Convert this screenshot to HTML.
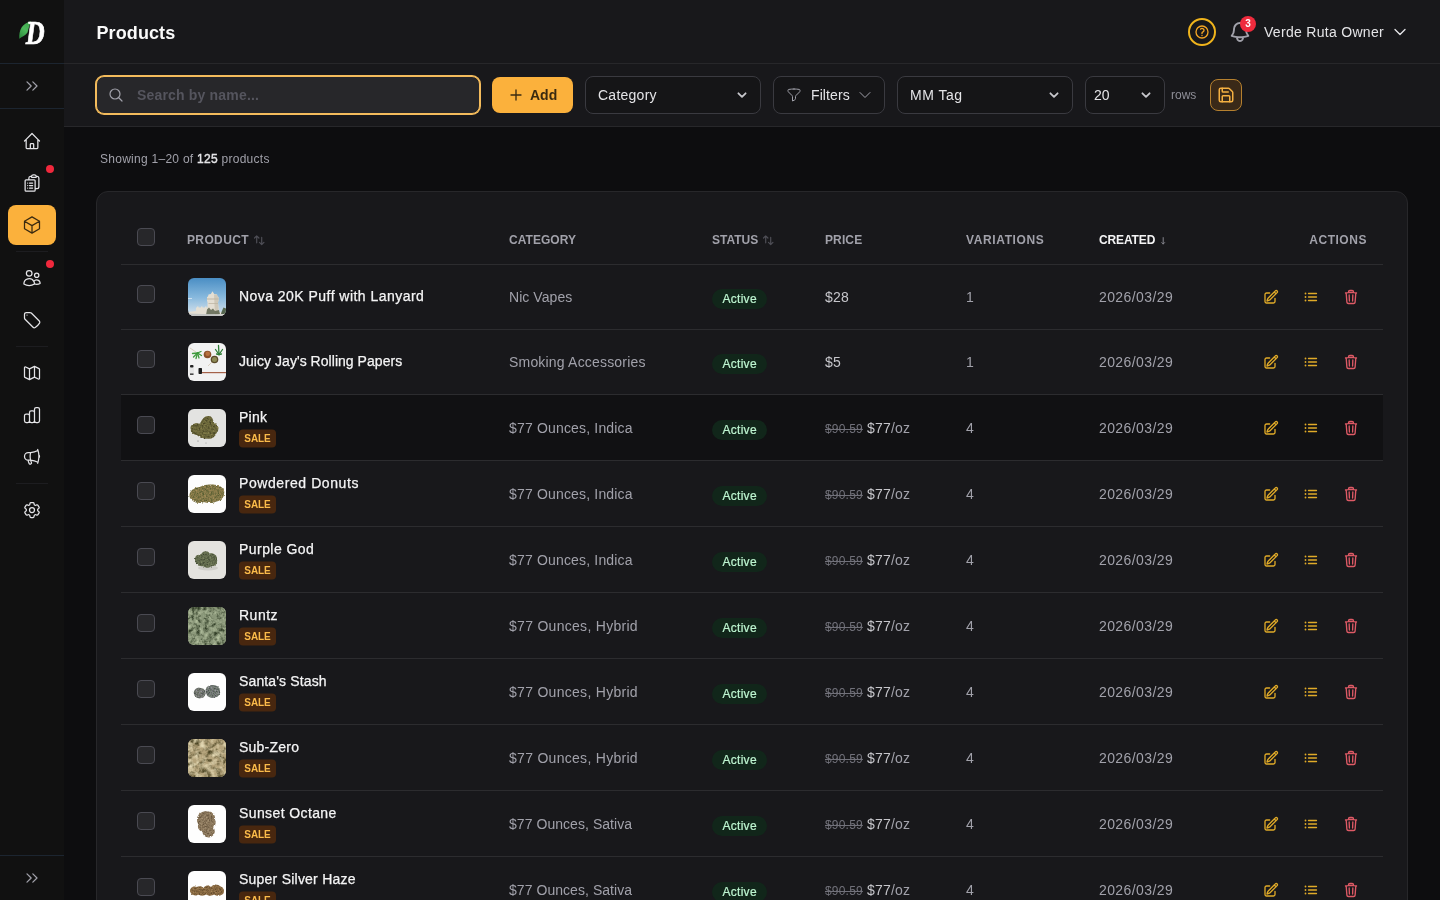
<!DOCTYPE html><html lang="en"><head><meta charset="utf-8"><title>Products</title><style>
*{box-sizing:border-box;margin:0;padding:0}
html,body{width:1440px;height:900px;overflow:hidden;background:#0d0d0f;color:#e4e4e7;font-family:"Liberation Sans",sans-serif;font-size:14px;-webkit-font-smoothing:antialiased}
svg{display:block}
#app{position:absolute;left:0;top:0;width:1440px;height:900px;overflow:hidden;will-change:transform;background:#0d0d0f}
.abs{position:absolute}
.sb{position:absolute;left:0;top:0;width:64px;height:900px;background:#111111}
.sb .line{position:absolute;left:0;width:64px;height:1px;background:#1c2530}
.sb .sep{position:absolute;left:16px;width:32px;height:1px;background:#1d1d20}
.sb .it{position:absolute;left:8px;width:48px;height:40px;border-radius:8px;color:#e4e4e7;display:flex;align-items:center;justify-content:center}
.sb .it.on{background:#fbb13c;color:#3a2a10}
.sb .dot{position:absolute;left:46px;width:8px;height:8px;border-radius:50%;background:#f0283c}
.sb .chev{position:absolute;left:22px;color:#a1a1aa}
.hd{position:absolute;left:64px;top:0;width:1376px;height:64px;background:#18181b;border-bottom:1px solid #27272a}
.hd h1{position:absolute;left:32.5px;top:2px;line-height:63px;font-size:18px;font-weight:700;color:#fafafa;white-space:nowrap;letter-spacing:.1px}
.tb{position:absolute;left:64px;top:64px;width:1376px;height:63px;background:#18181b;border-bottom:1px solid #27272a}
.sel{position:absolute;top:76px;height:38px;border:1px solid #3a3a40;border-radius:8px;background:#151517;color:#e4e4e7;font-size:14px;line-height:36px;padding-left:12px;white-space:nowrap}
.sel svg{position:absolute;right:13.500px;top:15px;color:#c8c8cd}
.card{position:absolute;left:96px;top:191px;width:1312px;height:760px;background:#18181b;border:1px solid #27272a;border-radius:12px}
.row{position:absolute;left:24px;width:1262px;border-bottom:1px solid #2c2c2f}
.row.hov{background:#111113}
.c{position:absolute;white-space:nowrap}
.th{font-size:12px;font-weight:700;color:#a1a1aa;line-height:16px;top:16px}
.th .ar{font-weight:400;letter-spacing:-1px;color:#5a5a62;font-size:11px;margin-left:4px}
.cb{position:absolute;left:16px;width:18px;height:18px;border:1px solid #4a4a52;border-radius:4px;background:#27272a}
.thumb{position:absolute;left:67px;width:38px;height:38px;border-radius:6px;overflow:hidden}
.nm{left:118px;font-size:14px;font-weight:400;color:#f4f4f5;line-height:20px;-webkit-text-stroke:.25px #f4f4f5;letter-spacing:.42px}
.sale{position:absolute;left:118px;width:37px;height:18px;border-radius:4px;background:#48270f;color:#fbbb4a;font-size:10px;font-weight:700;letter-spacing:-.1px;line-height:18px;text-align:center}
.cat{left:388px;color:#a1a1aa;line-height:20px;letter-spacing:.15px}
.st{left:591px;width:55px;height:20px;border-radius:10px;background:#11261a;letter-spacing:.3px;padding-left:.3px;color:#bdf5d0;font-size:12px;line-height:20px;text-align:center;-webkit-text-stroke:.2px #bdf5d0}
.pr{left:704px;color:#c6c6cb;line-height:20px;letter-spacing:.2px}
.pr s{font-size:12px;color:#71717a}
.pr i{font-style:normal;color:#a1a1aa}
.va{left:845px;color:#a1a1aa;line-height:20px}
.dt{left:978px;color:#a1a1aa;line-height:20px;letter-spacing:.4px}
.ac{position:absolute;width:16px;height:16px;color:#e0aa28}
.ac.del{color:#de5a66}
</style></head><body><div id="app">
<aside class="sb">
<svg class="abs" style="left:0;top:0" width="64" height="63" viewBox="0 0 64 63"><defs><linearGradient id="lf" x1="0.8" y1="0" x2="0.2" y2="1"><stop offset="0" stop-color="#3fa34d"/><stop offset=".5" stop-color="#4cb85a"/><stop offset="1" stop-color="#2e8b3e"/></linearGradient></defs><path d="M19.300 38.800 C18.800 30 22 23.500 31 21.200 C29.500 25 28.500 29 27.500 32.500 C25.500 35.500 22 36.500 19.300 38.800Z" fill="url(#lf)"/><text transform="translate(25.800 43.500) scale(0.760 1)" font-family="Liberation Serif,serif" font-style="italic" font-weight="700" font-size="34.500" fill="#ffffff" stroke="#ffffff" stroke-width=".7">D</text></svg>
<div class="line" style="top:63px"></div>
<div class="chev" style="top:76px"><svg width="20" height="20" viewBox="0 0 24 24" fill="none" stroke="currentColor" stroke-width="1.5" stroke-linecap="round" stroke-linejoin="round" ><path d="m6 17 5-5-5-5"/><path d="m13 17 5-5-5-5"/></svg></div>
<div class="line" style="top:108px"></div>
<div class="it" style="top:121px"><svg width="20" height="20" viewBox="0 0 24 24" fill="none" stroke="currentColor" stroke-width="1.5" stroke-linecap="round" stroke-linejoin="round" ><path d="M3 12l2-2m0 0l7-7 7 7M5 10v10a1 1 0 001 1h3m10-11l2 2m-2-2v10a1 1 0 01-1 1h-3m-6 0a1 1 0 001-1v-4a1 1 0 011-1h2a1 1 0 011 1v4a1 1 0 001 1m-6 0h6"/></svg></div>
<div class="it" style="top:163px"><svg width="20" height="20" viewBox="0 0 24 24" fill="none" stroke="currentColor" stroke-width="1.5" stroke-linecap="round" stroke-linejoin="round" ><path d="M9 12h3.750M9 15h3.750M9 18h3.750m3 .750H18a2.250 2.250 0 0 0 2.250-2.250V6.108c0-1.135-.845-2.098-1.976-2.192a48.424 48.424 0 0 0-1.123-.080m-5.801 0c-.065.210-.100.433-.100.664 0 .414.336.750.750.750h4.500a.750.750 0 0 0 .750-.750 2.250 2.250 0 0 0-.100-.664m-5.800 0A2.251 2.251 0 0 1 13.500 2.250H15c1.012 0 1.867.668 2.150 1.586m-5.800 0c-.376.023-.750.050-1.124.080C9.095 4.010 8.250 4.973 8.250 6.108V8.250m0 0H4.875c-.621 0-1.125.504-1.125 1.125v11.250c0 .621.504 1.125 1.125 1.125h9.750c.621 0 1.125-.504 1.125-1.125V9.375c0-.621-.504-1.125-1.125-1.125H8.250ZM6.750 12h.008v.008H6.750V12Zm0 3h.008v.008H6.750V15Zm0 3h.008v.008H6.750V18Z"/></svg></div>
<div class="dot" style="top:165px"></div>
<div class="it on" style="top:205px"><svg width="20" height="20" viewBox="0 0 24 24" fill="none" stroke="currentColor" stroke-width="1.5" stroke-linecap="round" stroke-linejoin="round" ><path d="m21 7.500-9-5.250L3 7.500m18 0-9 5.250m9-5.250v9l-9 5.250M3 7.500l9 5.250M3 7.500v9l9 5.250m0-9v9"/></svg></div>
<div class="it" style="top:258px"><svg width="20" height="20" viewBox="0 0 24 24" fill="none" stroke="currentColor" stroke-width="1.5" stroke-linecap="round" stroke-linejoin="round" ><path d="M15 19.128a9.380 9.380 0 0 0 2.625.372 9.337 9.337 0 0 0 4.121-.952 4.125 4.125 0 0 0-7.533-2.493M15 19.128v-.003c0-1.113-.285-2.160-.786-3.070M15 19.128v.106A12.318 12.318 0 0 1 8.624 21c-2.331 0-4.512-.645-6.374-1.766l-.001-.109a6.375 6.375 0 0 1 11.964-3.070M12 6.375a3.375 3.375 0 1 1-6.750 0 3.375 3.375 0 0 1 6.750 0Zm8.250 2.250a2.625 2.625 0 1 1-5.250 0 2.625 2.625 0 0 1 5.250 0Z"/></svg></div>
<div class="dot" style="top:260px"></div>
<div class="it" style="top:300px"><svg width="20" height="20" viewBox="0 0 24 24" fill="none" stroke="currentColor" stroke-width="1.5" stroke-linecap="round" stroke-linejoin="round" ><path d="M9.568 3H5.250A2.250 2.250 0 0 0 3 5.250v4.318c0 .597.237 1.170.659 1.591l9.581 9.581c.699.699 1.780.872 2.607.330a18.095 18.095 0 0 0 5.223-5.223c.542-.827.369-1.908-.330-2.607L11.160 3.660A2.250 2.250 0 0 0 9.568 3Z"/><path d="M6 6h.008v.008H6V6Z"/></svg></div>
<div class="it" style="top:353px"><svg width="20" height="20" viewBox="0 0 24 24" fill="none" stroke="currentColor" stroke-width="1.5" stroke-linecap="round" stroke-linejoin="round" ><path d="M9 20l-5.447-2.724A1 1 0 013 16.382V5.618a1 1 0 011.447-.894L9 7m0 13l6-3m-6 3V7m6 10l4.553 2.276A1 1 0 0021 18.382V7.618a1 1 0 00-.553-.894L15 4m0 13V4m0 0L9 7"/></svg></div>
<div class="it" style="top:395px"><svg width="20" height="20" viewBox="0 0 24 24" fill="none" stroke="currentColor" stroke-width="1.5" stroke-linecap="round" stroke-linejoin="round" ><path d="M9 19v-6a2 2 0 00-2-2H5a2 2 0 00-2 2v6a2 2 0 002 2h2a2 2 0 002-2zm0 0V9a2 2 0 012-2h2a2 2 0 012 2v10m-6 0a2 2 0 002 2h2a2 2 0 002-2m0 0V5a2 2 0 012-2h2a2 2 0 012 2v14a2 2 0 01-2 2h-2a2 2 0 01-2-2z"/></svg></div>
<div class="it" style="top:437px"><svg width="20" height="20" viewBox="0 0 24 24" fill="none" stroke="currentColor" stroke-width="1.5" stroke-linecap="round" stroke-linejoin="round" ><path d="M10.340 15.840c-.688-.060-1.386-.090-2.090-.090H7.500a4.500 4.500 0 1 1 0-9h.750c.704 0 1.402-.030 2.090-.090m0 9.180c.253.962.584 1.892.985 2.783.247.550.060 1.210-.463 1.511l-.657.380c-.551.318-1.260.117-1.527-.461a20.845 20.845 0 0 1-1.440-4.282m3.102.069a18.030 18.030 0 0 1-.590-4.590c0-1.586.205-3.124.590-4.590m0 9.180a23.848 23.848 0 0 1 8.835 2.535M10.340 6.660a23.847 23.847 0 0 0 8.835-2.535m0 0A23.740 23.740 0 0 0 18.795 3m.380 1.125a23.910 23.910 0 0 1 1.014 5.395m-1.014 8.855c-.118.380-.245.754-.380 1.125m.380-1.125a23.910 23.910 0 0 0 1.014-5.395m0-3.460c.495.413.811 1.035.811 1.730 0 .695-.316 1.317-.811 1.730m0-3.460a24.347 24.347 0 0 1 0 3.460"/></svg></div>
<div class="it" style="top:490px"><svg width="20" height="20" viewBox="0 0 24 24" fill="none" stroke="currentColor" stroke-width="1.5" stroke-linecap="round" stroke-linejoin="round" ><path d="M9.594 3.940c.090-.542.560-.940 1.110-.940h2.593c.550 0 1.020.398 1.110.940l.213 1.281c.063.374.313.686.645.870.074.040.147.083.220.127.325.196.720.257 1.075.124l1.217-.456a1.125 1.125 0 0 1 1.370.490l1.296 2.247a1.125 1.125 0 0 1-.260 1.431l-1.003.827c-.293.241-.438.613-.430.992a7.723 7.723 0 0 1 0 .255c-.008.378.137.750.430.991l1.004.827c.424.350.534.955.260 1.430l-1.298 2.247a1.125 1.125 0 0 1-1.369.491l-1.217-.456c-.355-.133-.750-.072-1.076.124a6.470 6.470 0 0 1-.220.128c-.331.183-.581.495-.644.869l-.213 1.281c-.090.543-.560.940-1.110.940h-2.594c-.550 0-1.019-.398-1.110-.940l-.213-1.281c-.062-.374-.312-.686-.644-.870a6.520 6.520 0 0 1-.220-.127c-.325-.196-.720-.257-1.076-.124l-1.217.456a1.125 1.125 0 0 1-1.369-.490l-1.297-2.247a1.125 1.125 0 0 1 .260-1.431l1.004-.827c.292-.240.437-.613.430-.991a6.932 6.932 0 0 1 0-.255c.007-.380-.138-.751-.430-.992l-1.004-.827a1.125 1.125 0 0 1-.260-1.430l1.297-2.247a1.125 1.125 0 0 1 1.370-.491l1.216.456c.356.133.751.072 1.076-.124.072-.044.146-.086.220-.128.332-.183.582-.495.644-.869l.214-1.280Z"/><path d="M15 12a3 3 0 1 1-6 0 3 3 0 0 1 6 0Z"/></svg></div>
<div class="sep" style="top:251px"></div>
<div class="sep" style="top:346px"></div>
<div class="sep" style="top:483px"></div>
<div class="line" style="top:855px"></div>
<div class="chev" style="top:868px"><svg width="20" height="20" viewBox="0 0 24 24" fill="none" stroke="currentColor" stroke-width="1.5" stroke-linecap="round" stroke-linejoin="round" ><path d="m6 17 5-5-5-5"/><path d="m13 17 5-5-5-5"/></svg></div>
</aside>
<header class="hd"><h1>Products</h1>
<div class="abs" style="left:1124px;top:18px;width:28px;height:28px;border:2px solid #f0b41c;border-radius:50%;color:#f5a524;display:flex;align-items:center;justify-content:center"><svg width="16" height="16" viewBox="0 0 24 24" fill="none" stroke="currentColor" stroke-width="2" stroke-linecap="round" stroke-linejoin="round" ><path d="M9.879 7.519c1.171-1.025 3.071-1.025 4.242 0 1.172 1.025 1.172 2.687 0 3.712-.203.179-.430.326-.670.442-.745.361-1.450.999-1.450 1.827v.750M21 12a9 9 0 1 1-18 0 9 9 0 0 1 18 0Zm-9 5.250h.008v.008H12v-.008Z"/></svg></div>
<div class="abs" style="left:1164px;top:20px;color:#a1a1aa"><svg width="24" height="24" viewBox="0 0 24 24" fill="none" stroke="currentColor" stroke-width="1.9" stroke-linecap="round" stroke-linejoin="round" ><path d="M14.857 17.082a23.848 23.848 0 0 0 5.454-1.310A8.967 8.967 0 0 1 18 9.750V9A6 6 0 0 0 6 9v.750a8.967 8.967 0 0 1-2.312 6.022c1.733.640 3.560 1.085 5.455 1.310m5.714 0a24.255 24.255 0 0 1-5.714 0m5.714 0a3 3 0 1 1-5.714 0"/></svg></div>
<div class="abs" style="left:1176px;top:16px;width:16px;height:16px;border-radius:50%;background:#ef2b3d;color:#fff;font-size:10px;font-weight:700;line-height:16px;text-align:center">3</div>
<div class="abs" id="owner" style="letter-spacing:.3px;left:1200px;top:1px;line-height:63px;font-size:14px;color:#e4e4e7;white-space:nowrap">Verde Ruta Owner</div>
<div class="abs" style="left:1328px;top:24px;color:#e4e4e7"><svg width="16" height="16" viewBox="0 0 24 24" fill="none" stroke="currentColor" stroke-width="2" stroke-linecap="round" stroke-linejoin="round" ><path d="m19.500 8.250-7.500 7.500-7.500-7.500"/></svg></div>
</header>
<div class="tb"></div>
<div class="abs" style="left:96px;top:76px;width:384px;height:38px;border-radius:8px;background:#27272a;border:1px solid #f3bb5c;box-shadow:0 0 0 1px #f3bb5c"></div>
<div class="abs" style="left:108px;top:87px;color:#a1a1aa"><svg width="16" height="16" viewBox="0 0 24 24" fill="none" stroke="currentColor" stroke-width="1.8" stroke-linecap="round" stroke-linejoin="round" ><path d="m21 21-5.197-5.197m0 0A7.500 7.500 0 1 0 5.196 5.196a7.500 7.500 0 0 0 10.607 10.607Z"/></svg></div>
<div class="abs" id="ph" style="letter-spacing:.18px;left:137px;top:76px;line-height:38px;font-size:14px;font-weight:700;color:#55555e;white-space:nowrap">Search by name...</div>
<div class="abs" style="left:492px;top:77px;width:81px;height:36px;border-radius:8px;background:#fbb13c;color:#3a2a10"></div>
<div class="abs" style="left:508px;top:87px;color:#3a2a10"><svg width="16" height="16" viewBox="0 0 24 24" fill="none" stroke="currentColor" stroke-width="2" stroke-linecap="round" stroke-linejoin="round" ><path d="M12 4.500v15m7.500-7.500h-15"/></svg></div>
<div class="abs" id="add" style="left:530px;top:77px;line-height:36px;font-size:14px;font-weight:700;color:#3a2a10">Add</div>
<div class="sel" style="left:585px;width:176px"><span style="letter-spacing:.25px">Category</span><svg width="10" height="7" viewBox="0 0 10 7" fill="none" stroke="currentColor" stroke-width="1.800" stroke-linecap="round" stroke-linejoin="round"><path d="M1.400 1.300l3.600 3.600 3.600-3.600"/></svg></div>
<div class="sel" style="left:773px;width:112px"></div>
<div class="abs" style="left:786px;top:87px;color:#a1a1aa"><svg width="16" height="16" viewBox="0 0 24 24" fill="none" stroke="currentColor" stroke-width="1.5" stroke-linecap="round" stroke-linejoin="round" ><path d="M12 3c2.755 0 5.455.232 8.083.678.533.090.917.556.917 1.096v1.044a2.250 2.250 0 0 1-.659 1.591l-5.432 5.432a2.250 2.250 0 0 0-.659 1.591v2.927a2.250 2.250 0 0 1-1.244 2.013L9.750 21v-6.568a2.250 2.250 0 0 0-.659-1.591L3.659 7.409A2.250 2.250 0 0 1 3 5.818V4.774c0-.540.384-1.006.917-1.096A48.320 48.320 0 0 1 12 3Z"/></svg></div>
<div class="abs" id="filt" style="letter-spacing:.1px;left:811px;top:76px;line-height:38px;font-size:14px;color:#e4e4e7">Filters</div>
<div class="abs" style="left:857px;top:87px;color:#a1a1aa"><svg width="16" height="16" viewBox="0 0 24 24" fill="none" stroke="currentColor" stroke-width="1.5" stroke-linecap="round" stroke-linejoin="round" ><path d="m19.500 8.250-7.500 7.500-7.500-7.500"/></svg></div>
<div class="sel" style="left:897px;width:176px"><span style="letter-spacing:.5px">MM Tag</span><svg width="10" height="7" viewBox="0 0 10 7" fill="none" stroke="currentColor" stroke-width="1.800" stroke-linecap="round" stroke-linejoin="round"><path d="M1.400 1.300l3.600 3.600 3.600-3.600"/></svg></div>
<div class="sel" style="left:1085px;width:80px;padding-left:8px">20<svg width="10" height="7" viewBox="0 0 10 7" fill="none" stroke="currentColor" stroke-width="1.800" stroke-linecap="round" stroke-linejoin="round"><path d="M1.400 1.300l3.600 3.600 3.600-3.600"/></svg></div>
<div class="abs" id="rows" style="left:1171px;top:77px;line-height:37px;font-size:12px;color:#8e8e97">rows</div>
<div class="abs" style="left:1210px;top:79px;width:32px;height:32px;border-radius:8px;background:#3a2918;border:1px solid #b5802f;color:#f5b041;display:flex;align-items:center;justify-content:center"><svg width="18" height="18" viewBox="0 0 24 24" fill="none" stroke="currentColor" stroke-width="2" stroke-linecap="round" stroke-linejoin="round" ><path d="M15.200 3a2 2 0 0 1 1.400.600l3.800 3.800a2 2 0 0 1 .600 1.400V19a2 2 0 0 1-2 2H5a2 2 0 0 1-2-2V5a2 2 0 0 1 2-2z"/><path d="M17 21v-7a1 1 0 0 0-1-1H8a1 1 0 0 0-1 1v7"/><path d="M7 3v4a1 1 0 0 0 1 1h7"/></svg></div>
<div class="abs" id="show" style="left:100px;top:151px;line-height:16px;font-size:12px;letter-spacing:.27px;color:#a1a1aa;white-space:nowrap">Showing 1–20 of <b style="color:#e4e4e7;font-weight:400;-webkit-text-stroke:.4px #e4e4e7">125</b> products</div>
<div class="card">
<div class="row" style="top:24px;height:49px">
<div class="cb" style="top:12px"></div>
<div class="c th" style="left:66px"><span style="letter-spacing:0.37px">PRODUCT</span></div>
<div class="c th" style="left:388px"><span style="letter-spacing:0.04px">CATEGORY</span></div>
<div class="c th" style="left:591px"><span style="letter-spacing:0px">STATUS</span></div>
<div class="c th" style="left:704px"><span style="letter-spacing:0.12px">PRICE</span></div>
<div class="c th" style="left:845px"><span style="letter-spacing:0.62px">VARIATIONS</span></div>
<div class="c th" style="left:978px;color:#f4f4f5"><span style="letter-spacing:-0.13px">CREATED</span></div>
<svg class="abs" style="left:132.9px;top:19px;color:#4e4e56" width="11" height="11" viewBox="0 0 11 11" fill="none" stroke="currentColor" stroke-width="1.2" stroke-linecap="round" stroke-linejoin="round"><path d="M2.700 7.800V.900M.500 3l2.200-2.200L4.900 3M7.700 2.400v7.200M5.500 7.400l2.200 2.200 2.200-2.200"/></svg>
<svg class="abs" style="left:642px;top:19px;color:#4e4e56" width="11" height="11" viewBox="0 0 11 11" fill="none" stroke="currentColor" stroke-width="1.2" stroke-linecap="round" stroke-linejoin="round"><path d="M2.700 7.800V.900M.500 3l2.200-2.200L4.900 3M7.700 2.400v7.200M5.500 7.400l2.200 2.200 2.200-2.200"/></svg>
<svg class="abs" style="left:1039.500px;top:21px;color:#85858d" width="5" height="8" viewBox="0 0 5 8" fill="none" stroke="currentColor" stroke-width="1" stroke-linecap="round" stroke-linejoin="round"><path d="M2.200.600v6.400M.800 5.600l1.400 1.400 1.400-1.400"/></svg>
<div class="c th" style="right:16px"><span style="letter-spacing:0.54px">ACTIONS</span></div>
</div>
<div class="row" style="top:73px;height:65px">
<div class="cb" style="top:20.0px"></div>
<div class="thumb" style="top:13.0px"><svg width="38" height="38" viewBox="0 0 38 38"><defs><linearGradient id="sky" x1="0" y1="0" x2="0" y2="1"><stop offset="0" stop-color="#4a8ec4"/><stop offset=".5" stop-color="#86b8dd"/><stop offset=".85" stop-color="#c3d8e8"/><stop offset="1" stop-color="#d8e2ea"/></linearGradient></defs><rect width="38" height="38" fill="url(#sky)"/><path d="M0 34 L8 33 L8 29.500 L9 29.500 L9 28.500 L10.500 28.500 L10.500 29.500 L13 29.500 L13 28.500 L14.500 28.500 L14.500 29.500 L17 29.500 L17 28.500 L18.500 28.500 L18.500 29.500 L19.500 29.500 L19.500 24 L19 23 L19 19 L20 18.500 L20.500 16.500 L22.800 16 L24.500 13.300 L26.200 16 L29 16.500 L29.500 18.500 L30.500 19 L30.500 23 L30 24 L31 34 L38 35 L38 38 L0 38Z" fill="#e4dfd3"/><path d="M26 16.500 L29 16.500 L29.500 18.500 L30.500 19 L30.500 23 L30 24 L31 38 L27 38Z" fill="#cfc8b8"/><path d="M19 20.500h11.500v1H19z M20.500 25h9.500v.800h-9.500z" fill="#bdb5a3"/><path d="M19 31.500 L21 29.500 L23 32 L25 30.500 L27 33 L31 32 L32 36 L18 37Z" fill="#5f6650" opacity=".85"/><path d="M33.500 34 L35.500 29.500 L38 30.500 L38 36 L33 36Z" fill="#55664f"/><path d="M0 35.500 L14 36 L38 36.500 L38 38 L0 38Z" fill="#c4c6c4"/><rect x="0" y="20" width="4" height="1" fill="#e8f0f6" opacity=".7"/></svg></div>
<div class="c nm" style="top:21.0px;letter-spacing:0.46px">Nova 20K Puff with Lanyard</div>
<div class="c cat" style="top:22.0px;letter-spacing:0.06px">Nic Vapes</div>
<div class="c st" style="top:24.0px">Active</div>
<div class="c pr" style="top:22.0px">$28</div>
<div class="c va" style="top:22.0px">1</div>
<div class="c dt" style="top:22.0px">2026/03/29</div>
<div class="ac" style="left:1142px;top:24.0px"><svg width="16" height="16" viewBox="0 0 24 24" fill="none" stroke="currentColor" stroke-width="2" stroke-linecap="round" stroke-linejoin="round" ><path d="m16.862 4.487 1.687-1.688a1.875 1.875 0 1 1 2.652 2.652L10.582 16.070a4.500 4.500 0 0 1-1.897 1.130L6 18l.800-2.685a4.500 4.500 0 0 1 1.130-1.897l8.932-8.931Zm0 0L19.500 7.125M18 14v4.750A2.250 2.250 0 0 1 15.750 21H5.250A2.250 2.250 0 0 1 3 18.750V8.250A2.250 2.250 0 0 1 5.250 6H10"/></svg></div>
<div class="ac" style="left:1182px;top:24.0px"><svg width="16" height="16" viewBox="0 0 24 24" fill="none" stroke="currentColor" stroke-width="2" stroke-linecap="round" stroke-linejoin="round" ><path d="M8.250 6.750h12M8.250 12h12m-12 5.250h12M3.750 6.750h.007v.008H3.750V6.750Zm.375 0a.375.375 0 1 1-.750 0 .375.375 0 0 1 .750 0ZM3.750 12h.007v.008H3.750V12Zm.375 0a.375.375 0 1 1-.750 0 .375.375 0 0 1 .750 0Zm-.375 5.250h.007v.008H3.750v-.008Zm.375 0a.375.375 0 1 1-.750 0 .375.375 0 0 1 .750 0Z"/></svg></div>
<div class="ac del" style="left:1222px;top:24.0px"><svg width="16" height="16" viewBox="0 0 24 24" fill="none" stroke="currentColor" stroke-width="2" stroke-linecap="round" stroke-linejoin="round" ><path d="m14.740 9-.346 9m-4.788 0L9.260 9m9.968-3.210c.342.052.682.107 1.022.166m-1.022-.165L18.160 19.673a2.250 2.250 0 0 1-2.244 2.077H8.084a2.250 2.250 0 0 1-2.244-2.077L4.772 5.790m14.456 0a48.108 48.108 0 0 0-3.478-.397m-12 .562c.340-.059.680-.114 1.022-.165m0 0a48.110 48.110 0 0 1 3.478-.397m7.500 0v-.916c0-1.180-.910-2.164-2.090-2.201a51.964 51.964 0 0 0-3.320 0c-1.180.037-2.090 1.022-2.090 2.201v.916m7.500 0a48.667 48.667 0 0 0-7.500 0"/></svg></div>
</div>
<div class="row" style="top:138px;height:65px">
<div class="cb" style="top:20.0px"></div>
<div class="thumb" style="top:13.0px"><svg width="38" height="38" viewBox="0 0 38 38"><defs></defs><rect width="38" height="38" fill="#f2f2f2"/><g stroke="#3e9a3c" stroke-width="1.300" stroke-linecap="round"><path d="M9.500 10 L4.500 10.500"/><path d="M9.500 10 L5.500 14"/><path d="M9.500 10 L8 15.500"/><path d="M9.500 10 L11 15"/><path d="M9.500 10 L13.500 12.500"/><path d="M9.500 10 L13 8.500"/></g><g stroke="#2f7d36" stroke-width="1.300" stroke-linecap="round"><path d="M31 11.500 L30.500 2.500"/><path d="M31 11.500 L27.500 6.500"/><path d="M31 11.500 L34.500 6.500"/><path d="M31 11.500 L28.500 11"/><path d="M31 11.500 L33.500 11"/></g><circle cx="19.500" cy="11.500" r="3.800" fill="#8a4f2a"/><circle cx="19.700" cy="10.800" r="2.300" fill="#b8703f"/><circle cx="26.500" cy="16.500" r="3.800" fill="#5a4a2a"/><circle cx="26.500" cy="16.500" r="2.500" fill="#8d8a55"/><rect x="1.500" y="23" width="4.500" height="9" rx="1.500" fill="#e6e6e6"/><rect x="2" y="22" width="3.500" height="2.500" rx="1" fill="#222"/><rect x="2" y="30.500" width="3.500" height="1.300" fill="#222"/><rect x="10.500" y="25" width="3.500" height="6" rx=".800" fill="#1c1c1c"/><rect x="14" y="29" width="24" height="1.200" fill="#a5624a"/><path d="M2 5 L8 9 M20 23 L24 19" stroke="#c9b9a0" stroke-width=".600"/></svg></div>
<div class="c nm" style="top:21.0px;letter-spacing:0.04px">Juicy Jay's Rolling Papers</div>
<div class="c cat" style="top:22.0px;letter-spacing:0.19px">Smoking Accessories</div>
<div class="c st" style="top:24.0px">Active</div>
<div class="c pr" style="top:22.0px">$5</div>
<div class="c va" style="top:22.0px">1</div>
<div class="c dt" style="top:22.0px">2026/03/29</div>
<div class="ac" style="left:1142px;top:24.0px"><svg width="16" height="16" viewBox="0 0 24 24" fill="none" stroke="currentColor" stroke-width="2" stroke-linecap="round" stroke-linejoin="round" ><path d="m16.862 4.487 1.687-1.688a1.875 1.875 0 1 1 2.652 2.652L10.582 16.070a4.500 4.500 0 0 1-1.897 1.130L6 18l.800-2.685a4.500 4.500 0 0 1 1.130-1.897l8.932-8.931Zm0 0L19.500 7.125M18 14v4.750A2.250 2.250 0 0 1 15.750 21H5.250A2.250 2.250 0 0 1 3 18.750V8.250A2.250 2.250 0 0 1 5.250 6H10"/></svg></div>
<div class="ac" style="left:1182px;top:24.0px"><svg width="16" height="16" viewBox="0 0 24 24" fill="none" stroke="currentColor" stroke-width="2" stroke-linecap="round" stroke-linejoin="round" ><path d="M8.250 6.750h12M8.250 12h12m-12 5.250h12M3.750 6.750h.007v.008H3.750V6.750Zm.375 0a.375.375 0 1 1-.750 0 .375.375 0 0 1 .750 0ZM3.750 12h.007v.008H3.750V12Zm.375 0a.375.375 0 1 1-.750 0 .375.375 0 0 1 .750 0Zm-.375 5.250h.007v.008H3.750v-.008Zm.375 0a.375.375 0 1 1-.750 0 .375.375 0 0 1 .750 0Z"/></svg></div>
<div class="ac del" style="left:1222px;top:24.0px"><svg width="16" height="16" viewBox="0 0 24 24" fill="none" stroke="currentColor" stroke-width="2" stroke-linecap="round" stroke-linejoin="round" ><path d="m14.740 9-.346 9m-4.788 0L9.260 9m9.968-3.210c.342.052.682.107 1.022.166m-1.022-.165L18.160 19.673a2.250 2.250 0 0 1-2.244 2.077H8.084a2.250 2.250 0 0 1-2.244-2.077L4.772 5.790m14.456 0a48.108 48.108 0 0 0-3.478-.397m-12 .562c.340-.059.680-.114 1.022-.165m0 0a48.110 48.110 0 0 1 3.478-.397m7.500 0v-.916c0-1.180-.910-2.164-2.090-2.201a51.964 51.964 0 0 0-3.320 0c-1.180.037-2.090 1.022-2.090 2.201v.916m7.500 0a48.667 48.667 0 0 0-7.500 0"/></svg></div>
</div>
<div class="row hov" style="top:203px;height:66px">
<div class="cb" style="top:20.5px"></div>
<div class="thumb" style="top:13.5px"><svg width="38" height="38" viewBox="0 0 38 38"><defs><filter id="f3" x="-10%" y="-10%" width="120%" height="120%" color-interpolation-filters="sRGB"><feTurbulence type="fractalNoise" baseFrequency="0.55" numOctaves="3" seed="3" result="t"/><feDisplacementMap in="SourceGraphic" in2="t" scale="2.5" xChannelSelector="R" yChannelSelector="G" result="d"/><feColorMatrix in="t" type="matrix" values="0 0 0 0 0.2  0 0 0 0 0.19  0 0 0 0 0.1  1.8 0 0 0 -0.75" result="dark"/><feColorMatrix in="t" type="matrix" values="0 0 0 0 0.6  0 0 0 0 0.57  0 0 0 0 0.34  0 1.6 0 0 -0.75" result="light"/><feComposite in="dark" in2="d" operator="in" result="dk"/><feComposite in="light" in2="d" operator="in" result="lt"/><feMerge><feMergeNode in="d"/><feMergeNode in="dk"/><feMergeNode in="lt"/></feMerge></filter></defs><rect width="38" height="38" fill="#e3e3e1"/><g filter="url(#f3)"><path d="M2.500 20 C2 15 8 13 12 15 C14 10 17 6.500 21 7 C25 7.500 25 12 26.500 14.500 C31 16 31.500 21 28.500 24 C27 28.500 23 30.500 19 29.500 C14 30 11 28 9 26 C5 25.500 3 23 2.500 20Z" fill="#6e6a3c"/></g><circle cx="10" cy="32" r=".600" fill="#777"/><circle cx="18" cy="34" r=".500" fill="#888"/></svg></div>
<div class="c nm" style="top:11.5px;letter-spacing:0.25px">Pink</div>
<div class="sale" style="top:35.0px;transform:translateY(-.5px)">SALE</div>
<div class="c cat" style="top:22.5px;letter-spacing:0.17px">$77 Ounces, Indica</div>
<div class="c st" style="top:24.5px">Active</div>
<div class="c pr" style="top:22.5px"><s>$90.59</s> $77<i>/oz</i></div>
<div class="c va" style="top:22.5px">4</div>
<div class="c dt" style="top:22.5px">2026/03/29</div>
<div class="ac" style="left:1142px;top:24.5px"><svg width="16" height="16" viewBox="0 0 24 24" fill="none" stroke="currentColor" stroke-width="2" stroke-linecap="round" stroke-linejoin="round" ><path d="m16.862 4.487 1.687-1.688a1.875 1.875 0 1 1 2.652 2.652L10.582 16.070a4.500 4.500 0 0 1-1.897 1.130L6 18l.800-2.685a4.500 4.500 0 0 1 1.130-1.897l8.932-8.931Zm0 0L19.500 7.125M18 14v4.750A2.250 2.250 0 0 1 15.750 21H5.250A2.250 2.250 0 0 1 3 18.750V8.250A2.250 2.250 0 0 1 5.250 6H10"/></svg></div>
<div class="ac" style="left:1182px;top:24.5px"><svg width="16" height="16" viewBox="0 0 24 24" fill="none" stroke="currentColor" stroke-width="2" stroke-linecap="round" stroke-linejoin="round" ><path d="M8.250 6.750h12M8.250 12h12m-12 5.250h12M3.750 6.750h.007v.008H3.750V6.750Zm.375 0a.375.375 0 1 1-.750 0 .375.375 0 0 1 .750 0ZM3.750 12h.007v.008H3.750V12Zm.375 0a.375.375 0 1 1-.750 0 .375.375 0 0 1 .750 0Zm-.375 5.250h.007v.008H3.750v-.008Zm.375 0a.375.375 0 1 1-.750 0 .375.375 0 0 1 .750 0Z"/></svg></div>
<div class="ac del" style="left:1222px;top:24.5px"><svg width="16" height="16" viewBox="0 0 24 24" fill="none" stroke="currentColor" stroke-width="2" stroke-linecap="round" stroke-linejoin="round" ><path d="m14.740 9-.346 9m-4.788 0L9.260 9m9.968-3.210c.342.052.682.107 1.022.166m-1.022-.165L18.160 19.673a2.250 2.250 0 0 1-2.244 2.077H8.084a2.250 2.250 0 0 1-2.244-2.077L4.772 5.790m14.456 0a48.108 48.108 0 0 0-3.478-.397m-12 .562c.340-.059.680-.114 1.022-.165m0 0a48.110 48.110 0 0 1 3.478-.397m7.500 0v-.916c0-1.180-.910-2.164-2.090-2.201a51.964 51.964 0 0 0-3.320 0c-1.180.037-2.090 1.022-2.090 2.201v.916m7.500 0a48.667 48.667 0 0 0-7.500 0"/></svg></div>
</div>
<div class="row" style="top:269px;height:66px">
<div class="cb" style="top:20.5px"></div>
<div class="thumb" style="top:13.5px"><svg width="38" height="38" viewBox="0 0 38 38"><defs><filter id="f4" x="-10%" y="-10%" width="120%" height="120%" color-interpolation-filters="sRGB"><feTurbulence type="fractalNoise" baseFrequency="0.6" numOctaves="3" seed="4" result="t"/><feDisplacementMap in="SourceGraphic" in2="t" scale="2.5" xChannelSelector="R" yChannelSelector="G" result="d"/><feColorMatrix in="t" type="matrix" values="0 0 0 0 0.24  0 0 0 0 0.3  0 0 0 0 0.14  2.0 0 0 0 -0.8" result="dark"/><feColorMatrix in="t" type="matrix" values="0 0 0 0 0.74  0 0 0 0 0.6  0 0 0 0 0.38  0 1.6 0 0 -0.75" result="light"/><feComposite in="dark" in2="d" operator="in" result="dk"/><feComposite in="light" in2="d" operator="in" result="lt"/><feMerge><feMergeNode in="d"/><feMergeNode in="dk"/><feMergeNode in="lt"/></feMerge></filter></defs><rect width="38" height="38" fill="#fdfdfd"/><g filter="url(#f4)"><path d="M1.500 20 C2 15 7 12.500 12 12 C17 9 25 9 30 10.500 C35 12 37 16 36 19 C36 23 32 26 28 26.500 C24 29 19 28 16 27 C11 29 6 27.500 4 25 C2 23.500 1.500 22 1.500 20Z" fill="#8a7d4c"/></g></svg></div>
<div class="c nm" style="top:11.5px;letter-spacing:0.58px">Powdered Donuts</div>
<div class="sale" style="top:35.0px;transform:translateY(-.5px)">SALE</div>
<div class="c cat" style="top:22.5px;letter-spacing:0.17px">$77 Ounces, Indica</div>
<div class="c st" style="top:24.5px">Active</div>
<div class="c pr" style="top:22.5px"><s>$90.59</s> $77<i>/oz</i></div>
<div class="c va" style="top:22.5px">4</div>
<div class="c dt" style="top:22.5px">2026/03/29</div>
<div class="ac" style="left:1142px;top:24.5px"><svg width="16" height="16" viewBox="0 0 24 24" fill="none" stroke="currentColor" stroke-width="2" stroke-linecap="round" stroke-linejoin="round" ><path d="m16.862 4.487 1.687-1.688a1.875 1.875 0 1 1 2.652 2.652L10.582 16.070a4.500 4.500 0 0 1-1.897 1.130L6 18l.800-2.685a4.500 4.500 0 0 1 1.130-1.897l8.932-8.931Zm0 0L19.500 7.125M18 14v4.750A2.250 2.250 0 0 1 15.750 21H5.250A2.250 2.250 0 0 1 3 18.750V8.250A2.250 2.250 0 0 1 5.250 6H10"/></svg></div>
<div class="ac" style="left:1182px;top:24.5px"><svg width="16" height="16" viewBox="0 0 24 24" fill="none" stroke="currentColor" stroke-width="2" stroke-linecap="round" stroke-linejoin="round" ><path d="M8.250 6.750h12M8.250 12h12m-12 5.250h12M3.750 6.750h.007v.008H3.750V6.750Zm.375 0a.375.375 0 1 1-.750 0 .375.375 0 0 1 .750 0ZM3.750 12h.007v.008H3.750V12Zm.375 0a.375.375 0 1 1-.750 0 .375.375 0 0 1 .750 0Zm-.375 5.250h.007v.008H3.750v-.008Zm.375 0a.375.375 0 1 1-.750 0 .375.375 0 0 1 .750 0Z"/></svg></div>
<div class="ac del" style="left:1222px;top:24.5px"><svg width="16" height="16" viewBox="0 0 24 24" fill="none" stroke="currentColor" stroke-width="2" stroke-linecap="round" stroke-linejoin="round" ><path d="m14.740 9-.346 9m-4.788 0L9.260 9m9.968-3.210c.342.052.682.107 1.022.166m-1.022-.165L18.160 19.673a2.250 2.250 0 0 1-2.244 2.077H8.084a2.250 2.250 0 0 1-2.244-2.077L4.772 5.790m14.456 0a48.108 48.108 0 0 0-3.478-.397m-12 .562c.340-.059.680-.114 1.022-.165m0 0a48.110 48.110 0 0 1 3.478-.397m7.500 0v-.916c0-1.180-.910-2.164-2.090-2.201a51.964 51.964 0 0 0-3.320 0c-1.180.037-2.090 1.022-2.090 2.201v.916m7.500 0a48.667 48.667 0 0 0-7.500 0"/></svg></div>
</div>
<div class="row" style="top:335px;height:66px">
<div class="cb" style="top:20.5px"></div>
<div class="thumb" style="top:13.5px"><svg width="38" height="38" viewBox="0 0 38 38"><defs><filter id="f5" x="-10%" y="-10%" width="120%" height="120%" color-interpolation-filters="sRGB"><feTurbulence type="fractalNoise" baseFrequency="0.6" numOctaves="3" seed="5" result="t"/><feDisplacementMap in="SourceGraphic" in2="t" scale="2.5" xChannelSelector="R" yChannelSelector="G" result="d"/><feColorMatrix in="t" type="matrix" values="0 0 0 0 0.2  0 0 0 0 0.23  0 0 0 0 0.16  2.0 0 0 0 -0.8" result="dark"/><feColorMatrix in="t" type="matrix" values="0 0 0 0 0.58  0 0 0 0 0.62  0 0 0 0 0.46  0 1.6 0 0 -0.75" result="light"/><feComposite in="dark" in2="d" operator="in" result="dk"/><feComposite in="light" in2="d" operator="in" result="lt"/><feMerge><feMergeNode in="d"/><feMergeNode in="dk"/><feMergeNode in="lt"/></feMerge></filter></defs><rect width="38" height="38" fill="#e4e3df"/><ellipse cx="20" cy="27" rx="10" ry="2.500" fill="#cfcec9"/><g filter="url(#f5)"><path d="M7 19 C6.500 15 10 12.500 13 13.500 C15 9.500 20 9.500 21.500 12.500 C25 11.500 29.500 14 29 18.500 C30 22 27.500 25.500 24 25 C21.500 27.500 17 27 15 25 C11 26 7.500 23 7 19Z" fill="#667050"/></g></svg></div>
<div class="c nm" style="top:11.5px;letter-spacing:0.45px">Purple God</div>
<div class="sale" style="top:35.0px;transform:translateY(-.5px)">SALE</div>
<div class="c cat" style="top:22.5px;letter-spacing:0.17px">$77 Ounces, Indica</div>
<div class="c st" style="top:24.5px">Active</div>
<div class="c pr" style="top:22.5px"><s>$90.59</s> $77<i>/oz</i></div>
<div class="c va" style="top:22.5px">4</div>
<div class="c dt" style="top:22.5px">2026/03/29</div>
<div class="ac" style="left:1142px;top:24.5px"><svg width="16" height="16" viewBox="0 0 24 24" fill="none" stroke="currentColor" stroke-width="2" stroke-linecap="round" stroke-linejoin="round" ><path d="m16.862 4.487 1.687-1.688a1.875 1.875 0 1 1 2.652 2.652L10.582 16.070a4.500 4.500 0 0 1-1.897 1.130L6 18l.800-2.685a4.500 4.500 0 0 1 1.130-1.897l8.932-8.931Zm0 0L19.500 7.125M18 14v4.750A2.250 2.250 0 0 1 15.750 21H5.250A2.250 2.250 0 0 1 3 18.750V8.250A2.250 2.250 0 0 1 5.250 6H10"/></svg></div>
<div class="ac" style="left:1182px;top:24.5px"><svg width="16" height="16" viewBox="0 0 24 24" fill="none" stroke="currentColor" stroke-width="2" stroke-linecap="round" stroke-linejoin="round" ><path d="M8.250 6.750h12M8.250 12h12m-12 5.250h12M3.750 6.750h.007v.008H3.750V6.750Zm.375 0a.375.375 0 1 1-.750 0 .375.375 0 0 1 .750 0ZM3.750 12h.007v.008H3.750V12Zm.375 0a.375.375 0 1 1-.750 0 .375.375 0 0 1 .750 0Zm-.375 5.250h.007v.008H3.750v-.008Zm.375 0a.375.375 0 1 1-.750 0 .375.375 0 0 1 .750 0Z"/></svg></div>
<div class="ac del" style="left:1222px;top:24.5px"><svg width="16" height="16" viewBox="0 0 24 24" fill="none" stroke="currentColor" stroke-width="2" stroke-linecap="round" stroke-linejoin="round" ><path d="m14.740 9-.346 9m-4.788 0L9.260 9m9.968-3.210c.342.052.682.107 1.022.166m-1.022-.165L18.160 19.673a2.250 2.250 0 0 1-2.244 2.077H8.084a2.250 2.250 0 0 1-2.244-2.077L4.772 5.790m14.456 0a48.108 48.108 0 0 0-3.478-.397m-12 .562c.340-.059.680-.114 1.022-.165m0 0a48.110 48.110 0 0 1 3.478-.397m7.500 0v-.916c0-1.180-.910-2.164-2.090-2.201a51.964 51.964 0 0 0-3.320 0c-1.180.037-2.090 1.022-2.090 2.201v.916m7.500 0a48.667 48.667 0 0 0-7.500 0"/></svg></div>
</div>
<div class="row" style="top:401px;height:66px">
<div class="cb" style="top:20.5px"></div>
<div class="thumb" style="top:13.5px"><svg width="38" height="38" viewBox="0 0 38 38"><defs><filter id="f6" x="-10%" y="-10%" width="120%" height="120%" color-interpolation-filters="sRGB"><feTurbulence type="fractalNoise" baseFrequency="0.24" numOctaves="3" seed="6" result="t"/><feDisplacementMap in="SourceGraphic" in2="t" scale="0" xChannelSelector="R" yChannelSelector="G" result="d"/><feColorMatrix in="t" type="matrix" values="0 0 0 0 0.2  0 0 0 0 0.25  0 0 0 0 0.16  3.2 0 0 0 -1.35" result="dark"/><feColorMatrix in="t" type="matrix" values="0 0 0 0 0.7  0 0 0 0 0.75  0 0 0 0 0.62  0 2.4 0 0 -1.0" result="light"/><feComposite in="dark" in2="d" operator="in" result="dk"/><feComposite in="light" in2="d" operator="in" result="lt"/><feMerge><feMergeNode in="d"/><feMergeNode in="dk"/><feMergeNode in="lt"/></feMerge></filter></defs><rect width="38" height="38" fill="#8a9779"/><rect width="38" height="38" fill="#8a9779" filter="url(#f6)"/></svg></div>
<div class="c nm" style="top:11.5px;letter-spacing:0.5px">Runtz</div>
<div class="sale" style="top:35.0px;transform:translateY(-.5px)">SALE</div>
<div class="c cat" style="top:22.5px;letter-spacing:0.29px">$77 Ounces, Hybrid</div>
<div class="c st" style="top:24.5px">Active</div>
<div class="c pr" style="top:22.5px"><s>$90.59</s> $77<i>/oz</i></div>
<div class="c va" style="top:22.5px">4</div>
<div class="c dt" style="top:22.5px">2026/03/29</div>
<div class="ac" style="left:1142px;top:24.5px"><svg width="16" height="16" viewBox="0 0 24 24" fill="none" stroke="currentColor" stroke-width="2" stroke-linecap="round" stroke-linejoin="round" ><path d="m16.862 4.487 1.687-1.688a1.875 1.875 0 1 1 2.652 2.652L10.582 16.070a4.500 4.500 0 0 1-1.897 1.130L6 18l.800-2.685a4.500 4.500 0 0 1 1.130-1.897l8.932-8.931Zm0 0L19.500 7.125M18 14v4.750A2.250 2.250 0 0 1 15.750 21H5.250A2.250 2.250 0 0 1 3 18.750V8.250A2.250 2.250 0 0 1 5.250 6H10"/></svg></div>
<div class="ac" style="left:1182px;top:24.5px"><svg width="16" height="16" viewBox="0 0 24 24" fill="none" stroke="currentColor" stroke-width="2" stroke-linecap="round" stroke-linejoin="round" ><path d="M8.250 6.750h12M8.250 12h12m-12 5.250h12M3.750 6.750h.007v.008H3.750V6.750Zm.375 0a.375.375 0 1 1-.750 0 .375.375 0 0 1 .750 0ZM3.750 12h.007v.008H3.750V12Zm.375 0a.375.375 0 1 1-.750 0 .375.375 0 0 1 .750 0Zm-.375 5.250h.007v.008H3.750v-.008Zm.375 0a.375.375 0 1 1-.750 0 .375.375 0 0 1 .750 0Z"/></svg></div>
<div class="ac del" style="left:1222px;top:24.5px"><svg width="16" height="16" viewBox="0 0 24 24" fill="none" stroke="currentColor" stroke-width="2" stroke-linecap="round" stroke-linejoin="round" ><path d="m14.740 9-.346 9m-4.788 0L9.260 9m9.968-3.210c.342.052.682.107 1.022.166m-1.022-.165L18.160 19.673a2.250 2.250 0 0 1-2.244 2.077H8.084a2.250 2.250 0 0 1-2.244-2.077L4.772 5.790m14.456 0a48.108 48.108 0 0 0-3.478-.397m-12 .562c.340-.059.680-.114 1.022-.165m0 0a48.110 48.110 0 0 1 3.478-.397m7.500 0v-.916c0-1.180-.910-2.164-2.090-2.201a51.964 51.964 0 0 0-3.320 0c-1.180.037-2.090 1.022-2.090 2.201v.916m7.500 0a48.667 48.667 0 0 0-7.500 0"/></svg></div>
</div>
<div class="row" style="top:467px;height:66px">
<div class="cb" style="top:20.5px"></div>
<div class="thumb" style="top:13.5px"><svg width="38" height="38" viewBox="0 0 38 38"><defs><filter id="f7" x="-10%" y="-10%" width="120%" height="120%" color-interpolation-filters="sRGB"><feTurbulence type="fractalNoise" baseFrequency="0.7" numOctaves="3" seed="7" result="t"/><feDisplacementMap in="SourceGraphic" in2="t" scale="2" xChannelSelector="R" yChannelSelector="G" result="d"/><feColorMatrix in="t" type="matrix" values="0 0 0 0 0.14  0 0 0 0 0.16  0 0 0 0 0.18  1.8 0 0 0 -0.75" result="dark"/><feColorMatrix in="t" type="matrix" values="0 0 0 0 0.7  0 0 0 0 0.66  0 0 0 0 0.74  0 1.6 0 0 -0.75" result="light"/><feComposite in="dark" in2="d" operator="in" result="dk"/><feComposite in="light" in2="d" operator="in" result="lt"/><feMerge><feMergeNode in="d"/><feMergeNode in="dk"/><feMergeNode in="lt"/></feMerge></filter></defs><rect width="38" height="38" fill="#fefefe"/><g filter="url(#f7)"><path d="M6 21 C5 17 9 14 12.500 15 C16 15 18 18 17.500 21 C17 24.500 13 26 10 25 C7.500 24.500 6.500 23 6 21Z" fill="#777d72"/><path d="M17.500 19 C17 15 20 12 24 12 C28 11.500 32 14 32 17.500 C33 21 30 24.500 26 24.500 C22 25.500 18 23 17.500 19Z" fill="#757f74"/></g></svg></div>
<div class="c nm" style="top:11.5px;letter-spacing:0.14px">Santa's Stash</div>
<div class="sale" style="top:35.0px;transform:translateY(-.5px)">SALE</div>
<div class="c cat" style="top:22.5px;letter-spacing:0.29px">$77 Ounces, Hybrid</div>
<div class="c st" style="top:24.5px">Active</div>
<div class="c pr" style="top:22.5px"><s>$90.59</s> $77<i>/oz</i></div>
<div class="c va" style="top:22.5px">4</div>
<div class="c dt" style="top:22.5px">2026/03/29</div>
<div class="ac" style="left:1142px;top:24.5px"><svg width="16" height="16" viewBox="0 0 24 24" fill="none" stroke="currentColor" stroke-width="2" stroke-linecap="round" stroke-linejoin="round" ><path d="m16.862 4.487 1.687-1.688a1.875 1.875 0 1 1 2.652 2.652L10.582 16.070a4.500 4.500 0 0 1-1.897 1.130L6 18l.800-2.685a4.500 4.500 0 0 1 1.130-1.897l8.932-8.931Zm0 0L19.500 7.125M18 14v4.750A2.250 2.250 0 0 1 15.750 21H5.250A2.250 2.250 0 0 1 3 18.750V8.250A2.250 2.250 0 0 1 5.250 6H10"/></svg></div>
<div class="ac" style="left:1182px;top:24.5px"><svg width="16" height="16" viewBox="0 0 24 24" fill="none" stroke="currentColor" stroke-width="2" stroke-linecap="round" stroke-linejoin="round" ><path d="M8.250 6.750h12M8.250 12h12m-12 5.250h12M3.750 6.750h.007v.008H3.750V6.750Zm.375 0a.375.375 0 1 1-.750 0 .375.375 0 0 1 .750 0ZM3.750 12h.007v.008H3.750V12Zm.375 0a.375.375 0 1 1-.750 0 .375.375 0 0 1 .750 0Zm-.375 5.250h.007v.008H3.750v-.008Zm.375 0a.375.375 0 1 1-.750 0 .375.375 0 0 1 .750 0Z"/></svg></div>
<div class="ac del" style="left:1222px;top:24.5px"><svg width="16" height="16" viewBox="0 0 24 24" fill="none" stroke="currentColor" stroke-width="2" stroke-linecap="round" stroke-linejoin="round" ><path d="m14.740 9-.346 9m-4.788 0L9.260 9m9.968-3.210c.342.052.682.107 1.022.166m-1.022-.165L18.160 19.673a2.250 2.250 0 0 1-2.244 2.077H8.084a2.250 2.250 0 0 1-2.244-2.077L4.772 5.790m14.456 0a48.108 48.108 0 0 0-3.478-.397m-12 .562c.340-.059.680-.114 1.022-.165m0 0a48.110 48.110 0 0 1 3.478-.397m7.500 0v-.916c0-1.180-.910-2.164-2.090-2.201a51.964 51.964 0 0 0-3.320 0c-1.180.037-2.090 1.022-2.090 2.201v.916m7.500 0a48.667 48.667 0 0 0-7.500 0"/></svg></div>
</div>
<div class="row" style="top:533px;height:66px">
<div class="cb" style="top:20.5px"></div>
<div class="thumb" style="top:13.5px"><svg width="38" height="38" viewBox="0 0 38 38"><defs><filter id="f8" x="-10%" y="-10%" width="120%" height="120%" color-interpolation-filters="sRGB"><feTurbulence type="fractalNoise" baseFrequency="0.17" numOctaves="3" seed="8" result="t"/><feDisplacementMap in="SourceGraphic" in2="t" scale="0" xChannelSelector="R" yChannelSelector="G" result="d"/><feColorMatrix in="t" type="matrix" values="0 0 0 0 0.3  0 0 0 0 0.27  0 0 0 0 0.14  3.4 0 0 0 -1.45" result="dark"/><feColorMatrix in="t" type="matrix" values="0 0 0 0 0.9  0 0 0 0 0.86  0 0 0 0 0.72  0 2.6 0 0 -1.1" result="light"/><feComposite in="dark" in2="d" operator="in" result="dk"/><feComposite in="light" in2="d" operator="in" result="lt"/><feMerge><feMergeNode in="d"/><feMergeNode in="dk"/><feMergeNode in="lt"/></feMerge></filter></defs><rect width="38" height="38" fill="#b5a47c"/><rect width="38" height="38" fill="#b5a47c" filter="url(#f8)"/></svg></div>
<div class="c nm" style="top:11.5px;letter-spacing:0.23px">Sub-Zero</div>
<div class="sale" style="top:35.0px;transform:translateY(-.5px)">SALE</div>
<div class="c cat" style="top:22.5px;letter-spacing:0.29px">$77 Ounces, Hybrid</div>
<div class="c st" style="top:24.5px">Active</div>
<div class="c pr" style="top:22.5px"><s>$90.59</s> $77<i>/oz</i></div>
<div class="c va" style="top:22.5px">4</div>
<div class="c dt" style="top:22.5px">2026/03/29</div>
<div class="ac" style="left:1142px;top:24.5px"><svg width="16" height="16" viewBox="0 0 24 24" fill="none" stroke="currentColor" stroke-width="2" stroke-linecap="round" stroke-linejoin="round" ><path d="m16.862 4.487 1.687-1.688a1.875 1.875 0 1 1 2.652 2.652L10.582 16.070a4.500 4.500 0 0 1-1.897 1.130L6 18l.800-2.685a4.500 4.500 0 0 1 1.130-1.897l8.932-8.931Zm0 0L19.500 7.125M18 14v4.750A2.250 2.250 0 0 1 15.750 21H5.250A2.250 2.250 0 0 1 3 18.750V8.250A2.250 2.250 0 0 1 5.250 6H10"/></svg></div>
<div class="ac" style="left:1182px;top:24.5px"><svg width="16" height="16" viewBox="0 0 24 24" fill="none" stroke="currentColor" stroke-width="2" stroke-linecap="round" stroke-linejoin="round" ><path d="M8.250 6.750h12M8.250 12h12m-12 5.250h12M3.750 6.750h.007v.008H3.750V6.750Zm.375 0a.375.375 0 1 1-.750 0 .375.375 0 0 1 .750 0ZM3.750 12h.007v.008H3.750V12Zm.375 0a.375.375 0 1 1-.750 0 .375.375 0 0 1 .750 0Zm-.375 5.250h.007v.008H3.750v-.008Zm.375 0a.375.375 0 1 1-.750 0 .375.375 0 0 1 .750 0Z"/></svg></div>
<div class="ac del" style="left:1222px;top:24.5px"><svg width="16" height="16" viewBox="0 0 24 24" fill="none" stroke="currentColor" stroke-width="2" stroke-linecap="round" stroke-linejoin="round" ><path d="m14.740 9-.346 9m-4.788 0L9.260 9m9.968-3.210c.342.052.682.107 1.022.166m-1.022-.165L18.160 19.673a2.250 2.250 0 0 1-2.244 2.077H8.084a2.250 2.250 0 0 1-2.244-2.077L4.772 5.790m14.456 0a48.108 48.108 0 0 0-3.478-.397m-12 .562c.340-.059.680-.114 1.022-.165m0 0a48.110 48.110 0 0 1 3.478-.397m7.500 0v-.916c0-1.180-.910-2.164-2.090-2.201a51.964 51.964 0 0 0-3.320 0c-1.180.037-2.090 1.022-2.090 2.201v.916m7.500 0a48.667 48.667 0 0 0-7.500 0"/></svg></div>
</div>
<div class="row" style="top:599px;height:66px">
<div class="cb" style="top:20.5px"></div>
<div class="thumb" style="top:13.5px"><svg width="38" height="38" viewBox="0 0 38 38"><defs><filter id="f9" x="-10%" y="-10%" width="120%" height="120%" color-interpolation-filters="sRGB"><feTurbulence type="fractalNoise" baseFrequency="0.6" numOctaves="3" seed="9" result="t"/><feDisplacementMap in="SourceGraphic" in2="t" scale="2.5" xChannelSelector="R" yChannelSelector="G" result="d"/><feColorMatrix in="t" type="matrix" values="0 0 0 0 0.3  0 0 0 0 0.24  0 0 0 0 0.16  1.8 0 0 0 -0.75" result="dark"/><feColorMatrix in="t" type="matrix" values="0 0 0 0 0.78  0 0 0 0 0.7  0 0 0 0 0.58  0 1.6 0 0 -0.75" result="light"/><feComposite in="dark" in2="d" operator="in" result="dk"/><feComposite in="light" in2="d" operator="in" result="lt"/><feMerge><feMergeNode in="d"/><feMergeNode in="dk"/><feMergeNode in="lt"/></feMerge></filter></defs><rect width="38" height="38" fill="#fefefe"/><g filter="url(#f9)"><path d="M9 15 C9 9.500 14 5.500 19 6.500 C24 6 28 10 27 15 C28.500 18 27 21 25 22 C28 25 27 30 23 32 C19 33.500 15 31 14.500 27 C10.500 25.500 9 22 10.500 19 C9.500 18 9 16.500 9 15Z" fill="#8d795d"/></g></svg></div>
<div class="c nm" style="top:11.5px;letter-spacing:0.39px">Sunset Octane</div>
<div class="sale" style="top:35.0px;transform:translateY(-.5px)">SALE</div>
<div class="c cat" style="top:22.5px;letter-spacing:0.05px">$77 Ounces, Sativa</div>
<div class="c st" style="top:24.5px">Active</div>
<div class="c pr" style="top:22.5px"><s>$90.59</s> $77<i>/oz</i></div>
<div class="c va" style="top:22.5px">4</div>
<div class="c dt" style="top:22.5px">2026/03/29</div>
<div class="ac" style="left:1142px;top:24.5px"><svg width="16" height="16" viewBox="0 0 24 24" fill="none" stroke="currentColor" stroke-width="2" stroke-linecap="round" stroke-linejoin="round" ><path d="m16.862 4.487 1.687-1.688a1.875 1.875 0 1 1 2.652 2.652L10.582 16.070a4.500 4.500 0 0 1-1.897 1.130L6 18l.800-2.685a4.500 4.500 0 0 1 1.130-1.897l8.932-8.931Zm0 0L19.500 7.125M18 14v4.750A2.250 2.250 0 0 1 15.750 21H5.250A2.250 2.250 0 0 1 3 18.750V8.250A2.250 2.250 0 0 1 5.250 6H10"/></svg></div>
<div class="ac" style="left:1182px;top:24.5px"><svg width="16" height="16" viewBox="0 0 24 24" fill="none" stroke="currentColor" stroke-width="2" stroke-linecap="round" stroke-linejoin="round" ><path d="M8.250 6.750h12M8.250 12h12m-12 5.250h12M3.750 6.750h.007v.008H3.750V6.750Zm.375 0a.375.375 0 1 1-.750 0 .375.375 0 0 1 .750 0ZM3.750 12h.007v.008H3.750V12Zm.375 0a.375.375 0 1 1-.750 0 .375.375 0 0 1 .750 0Zm-.375 5.250h.007v.008H3.750v-.008Zm.375 0a.375.375 0 1 1-.750 0 .375.375 0 0 1 .750 0Z"/></svg></div>
<div class="ac del" style="left:1222px;top:24.5px"><svg width="16" height="16" viewBox="0 0 24 24" fill="none" stroke="currentColor" stroke-width="2" stroke-linecap="round" stroke-linejoin="round" ><path d="m14.740 9-.346 9m-4.788 0L9.260 9m9.968-3.210c.342.052.682.107 1.022.166m-1.022-.165L18.160 19.673a2.250 2.250 0 0 1-2.244 2.077H8.084a2.250 2.250 0 0 1-2.244-2.077L4.772 5.790m14.456 0a48.108 48.108 0 0 0-3.478-.397m-12 .562c.340-.059.680-.114 1.022-.165m0 0a48.110 48.110 0 0 1 3.478-.397m7.500 0v-.916c0-1.180-.910-2.164-2.090-2.201a51.964 51.964 0 0 0-3.320 0c-1.180.037-2.090 1.022-2.090 2.201v.916m7.500 0a48.667 48.667 0 0 0-7.500 0"/></svg></div>
</div>
<div class="row" style="top:665px;height:66px">
<div class="cb" style="top:20.5px"></div>
<div class="thumb" style="top:13.5px"><svg width="38" height="38" viewBox="0 0 38 38"><defs><filter id="f10" x="-10%" y="-10%" width="120%" height="120%" color-interpolation-filters="sRGB"><feTurbulence type="fractalNoise" baseFrequency="0.7" numOctaves="3" seed="10" result="t"/><feDisplacementMap in="SourceGraphic" in2="t" scale="2" xChannelSelector="R" yChannelSelector="G" result="d"/><feColorMatrix in="t" type="matrix" values="0 0 0 0 0.28  0 0 0 0 0.2  0 0 0 0 0.1  1.8 0 0 0 -0.75" result="dark"/><feColorMatrix in="t" type="matrix" values="0 0 0 0 0.75  0 0 0 0 0.62  0 0 0 0 0.42  0 1.6 0 0 -0.75" result="light"/><feComposite in="dark" in2="d" operator="in" result="dk"/><feComposite in="light" in2="d" operator="in" result="lt"/><feMerge><feMergeNode in="d"/><feMergeNode in="dk"/><feMergeNode in="lt"/></feMerge></filter></defs><rect width="38" height="38" fill="#fefefe"/><g filter="url(#f10)"><path d="M2 20 C2 16 6 14.500 9 16 C11 14.500 14 15 15.500 17 C17 14 21 13.500 23 16 C25 13.500 30 13 32.500 15.500 C36 16.500 37 20.500 35 23 C32 25.500 28 25 26.500 23.500 C24 25 20 25 18.500 23.500 C16 25 12 25 10.500 23.500 C7 25.500 2.500 24 2 20Z" fill="#8c6c44"/></g></svg></div>
<div class="c nm" style="top:11.5px;letter-spacing:0.23px">Super Silver Haze</div>
<div class="sale" style="top:35.0px;transform:translateY(-.5px)">SALE</div>
<div class="c cat" style="top:22.5px;letter-spacing:0.05px">$77 Ounces, Sativa</div>
<div class="c st" style="top:24.5px">Active</div>
<div class="c pr" style="top:22.5px"><s>$90.59</s> $77<i>/oz</i></div>
<div class="c va" style="top:22.5px">4</div>
<div class="c dt" style="top:22.5px">2026/03/29</div>
<div class="ac" style="left:1142px;top:24.5px"><svg width="16" height="16" viewBox="0 0 24 24" fill="none" stroke="currentColor" stroke-width="2" stroke-linecap="round" stroke-linejoin="round" ><path d="m16.862 4.487 1.687-1.688a1.875 1.875 0 1 1 2.652 2.652L10.582 16.070a4.500 4.500 0 0 1-1.897 1.130L6 18l.800-2.685a4.500 4.500 0 0 1 1.130-1.897l8.932-8.931Zm0 0L19.500 7.125M18 14v4.750A2.250 2.250 0 0 1 15.750 21H5.250A2.250 2.250 0 0 1 3 18.750V8.250A2.250 2.250 0 0 1 5.250 6H10"/></svg></div>
<div class="ac" style="left:1182px;top:24.5px"><svg width="16" height="16" viewBox="0 0 24 24" fill="none" stroke="currentColor" stroke-width="2" stroke-linecap="round" stroke-linejoin="round" ><path d="M8.250 6.750h12M8.250 12h12m-12 5.250h12M3.750 6.750h.007v.008H3.750V6.750Zm.375 0a.375.375 0 1 1-.750 0 .375.375 0 0 1 .750 0ZM3.750 12h.007v.008H3.750V12Zm.375 0a.375.375 0 1 1-.750 0 .375.375 0 0 1 .750 0Zm-.375 5.250h.007v.008H3.750v-.008Zm.375 0a.375.375 0 1 1-.750 0 .375.375 0 0 1 .750 0Z"/></svg></div>
<div class="ac del" style="left:1222px;top:24.5px"><svg width="16" height="16" viewBox="0 0 24 24" fill="none" stroke="currentColor" stroke-width="2" stroke-linecap="round" stroke-linejoin="round" ><path d="m14.740 9-.346 9m-4.788 0L9.260 9m9.968-3.210c.342.052.682.107 1.022.166m-1.022-.165L18.160 19.673a2.250 2.250 0 0 1-2.244 2.077H8.084a2.250 2.250 0 0 1-2.244-2.077L4.772 5.790m14.456 0a48.108 48.108 0 0 0-3.478-.397m-12 .562c.340-.059.680-.114 1.022-.165m0 0a48.110 48.110 0 0 1 3.478-.397m7.500 0v-.916c0-1.180-.910-2.164-2.090-2.201a51.964 51.964 0 0 0-3.320 0c-1.180.037-2.090 1.022-2.090 2.201v.916m7.500 0a48.667 48.667 0 0 0-7.500 0"/></svg></div>
</div>
</div>
</div></body></html>
